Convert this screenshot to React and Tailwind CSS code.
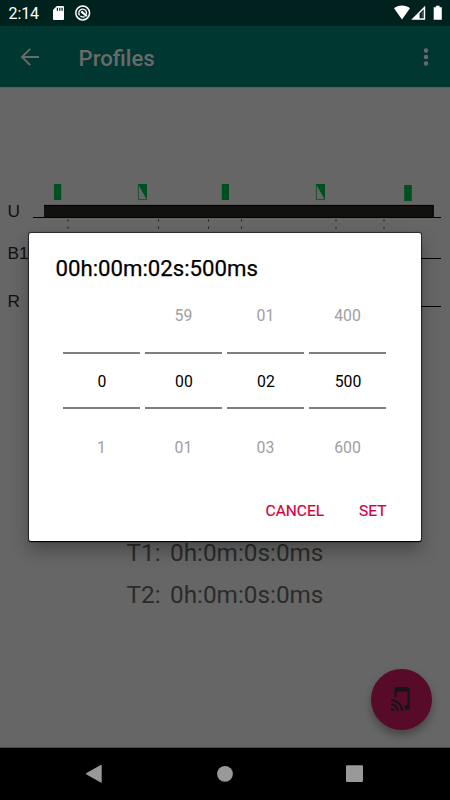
import { useState } from "react";

const columns = [
  { name: "hours", prev: "", value: "0", next: "1" },
  { name: "minutes", prev: "59", value: "00", next: "01" },
  { name: "seconds", prev: "01", value: "02", next: "03" },
  { name: "millis", prev: "400", value: "500", next: "600" },
];

function StatusBar() {
  return (
    <div className="flex h-[26px] items-center bg-[#00221e] pl-[8.5px] text-white">
      <span className="w-[31px] text-base leading-[26px] tracking-[-0.1px] pt-[2px]">2:14</span>
      <svg className="ml-[13.5px]" width="11" height="26" viewBox="0 0 11 26" fill="#fff">
        <path d="M3.8 6H10a1 1 0 0 1 1 1v12a1 1 0 0 1-1 1H1a1 1 0 0 1-1-1V10z" />
        <path d="M3.8 7.8h1.2v3H3.8zM6.2 7.8h1.2v3H6.2zM8.5 7.8h1.2v3H8.5z" fill="#00221e" />
      </svg>
      <svg className="ml-[11px]" width="16" height="26" viewBox="0 0 16 26" fill="none" stroke="#fff">
        <circle cx="7.7" cy="13" r="6.9" strokeWidth="1.5" />
        <path d="M4.6 15.4A3.9 3.9 0 1 1 11.4 14.2M5.4 16.1A3.9 3.9 0 0 0 9.6 16.6" strokeWidth="1.3" />
        <path d="M6.2 11.4l5.6 4.8" strokeWidth="2.2" />
      </svg>
      <svg className="ml-auto mr-[7px]" width="50" height="26" viewBox="0 0 50 26" fill="#fff">
        <path d="M1 8.3C5.4 4.6 12.6 4.6 17 8.3L9 19.4z" />
        <path d="M18.2 19.8L32.2 5.8V19.8z" />
        <path d="M26.6 13.4L30.7 9.3V18.3H26.6z" fill="#00221e" />
        <path d="M28.7 11.8h1v5.8h-1z" fill="#536b68" />
        <path d="M40.7 7.2h2.2V5.8h3.7v1.4h2.2v12.6h-8.1z" />
      </svg>
    </div>
  );
}

function AppBar() {
  return (
    <div className="flex h-[61px] items-center bg-[#003731] px-5 text-[#6a6a6a]">
      <svg width="20" height="20" viewBox="0 0 20 20" fill="none" stroke="currentColor" strokeWidth="1.9">
        <path d="M19 10H2.2M10.2 1.8L2 10l8.2 8.2" />
      </svg>
      <h1 className="ml-[38.5px] pt-[2px] text-[22.2px] leading-8 font-medium">Profiles</h1>
      <svg className="ml-auto" width="8" height="20" viewBox="0 0 8 20" fill="currentColor">
        <circle cx="4" cy="3.5" r="2.2" />
        <circle cx="4" cy="10" r="2.2" />
        <circle cx="4" cy="16.5" r="2.2" />
      </svg>
    </div>
  );
}

function TimingDiagram() {
  return (
    <svg className="block" width="450" height="150" viewBox="0 170 450 150">
      <g fill="#004f20">
        <path d="M54 184h7.2v16H54zM221.8 184h7.2v16h-7.2zM404.2 185h7.6v16h-7.6z" />
        <path d="M138 184h9v16zM316 184h9v16z" />
      </g>
      <path
        d="M138.4 184V199.6H147M316.4 184V199.6H325"
        stroke="#004f20"
        strokeWidth="0.8"
        fill="none"
      />
      <rect x="44" y="205" width="389.5" height="12.5" fill="#11120f" />
      <path d="M44 205.4h389.2V217.5" stroke="#000" strokeWidth="1" fill="none" />
      <path d="M33 217.5H441M33 258.5H441M33 306.5H441" stroke="#000" />
      {[68, 158.5, 208.5, 241.5, 336, 384].map((x) => (
        <path key={x} d={`M${x} 219.5v2M${x} 226.7v2`} stroke="#1b1b1b" />
      ))}
      <g fill="#111" fontSize="17.3" fontFamily="'Liberation Sans', Arial, sans-serif">
        <text x="7.6" y="217">U</text>
        <text x="7.6" y="259">B1</text>
        <text x="7.6" y="307">R</text>
      </g>
    </svg>
  );
}

function TimeDialog({ onClose }) {
  return (
    <div className="absolute top-[233px] left-[29px] flex h-[308px] w-[392px] flex-col rounded-[2px] bg-white shadow-[0_1px_1px_#000,0_0_1px_1px_rgba(0,0,0,0.6),0_9px_18px_rgba(0,0,0,0.3)]">
      <h2 className="mt-[19px] ml-[26.5px] text-[22.2px] leading-8 font-normal text-black [-webkit-text-stroke:0.25px_#000]">
        00h:00m:02s:500ms
      </h2>
      <div className="mt-[-1px] ml-[34px] flex gap-[5px]">
        {columns.map((col) => (
          <div key={col.name} className="flex w-[77px] flex-col text-center text-[15.8px] text-[#a0a0a0]">
            <div className="flex h-[69px] items-start justify-center pt-[21px] leading-6">{col.prev}</div>
            <div className="flex h-[57px] items-start justify-center border-y-2 border-[#7f7f7f] pt-[16px] pl-[1px] leading-6 text-black">
              {col.value}
            </div>
            <div className="flex h-[60px] items-start justify-center pt-[27px] leading-6">{col.next}</div>
          </div>
        ))}
      </div>
      <div className="mt-[29.5px] mr-[34.5px] flex justify-end gap-[35px] text-[15.5px] leading-6 font-normal text-[#d2003f] [-webkit-text-stroke:0.2px_#d2003f]">
        <button onClick={onClose}>CANCEL</button>
        <button onClick={onClose}>SET</button>
      </div>
    </div>
  );
}

function NavBar() {
  return (
    <div className="flex h-[52px] items-center bg-black px-[85px]">
      <svg width="280" height="52" viewBox="85 748 280 52" fill="#999">
        <path d="M86.5 773.1L100.7 765q1-.5 1 .6V782q0 1.1-1 .6L86.5 774.4q-1-.6 0-1.3z" />
        <circle cx="225" cy="773.8" r="7.9" />
        <rect x="346" y="765.2" width="17" height="16.8" rx="1" />
      </svg>
    </div>
  );
}

export default function App() {
  const [open, setOpen] = useState(true);

  return (
    <div className="relative flex h-[800px] w-[450px] flex-col overflow-hidden bg-[#666666] font-['Roboto',sans-serif]">
      <StatusBar />
      <AppBar />
      <div className="flex flex-1 flex-col border-y border-t-[#5b5b5b] border-b-[#484848] pt-[82px]">
        <TimingDiagram />
        <div className="mt-[212px] ml-[126.5px] text-[24.3px] leading-[41.5px] text-[#2b2b2b]">
          <p className="flex gap-[9.5px]">
            <span>T1:</span>
            <span>0h:0m:0s:0ms</span>
          </p>
          <p className="flex gap-[9.5px]">
            <span>T2:</span>
            <span>0h:0m:0s:0ms</span>
          </p>
        </div>
        <button
          className="mt-auto mr-[18px] mb-[17.5px] flex size-[61px] items-center justify-center self-end rounded-full bg-[#580a29] shadow-[0_5px_9px_rgba(0,0,0,0.32)]"
          onClick={() => setOpen(true)}
          aria-label="Read tag"
        >
          <svg width="26" height="26" viewBox="0 0 24 24" fill="#17131a">
            <path d="M2 16v2c2.76 0 5 2.24 5 5h2c0-3.87-3.13-7-7-7zm0 4v3h3c0-1.66-1.34-3-3-3zm0-8v2c4.97 0 9 4.03 9 9h2c0-6.08-4.92-11-11-11zM17 1.01L7 1c-1.1 0-2 .9-2 2v7.37c.69.16 1.36.37 2 .64V5h10v13h-3.03c.52 1.25.84 2.59.95 4H17c1.1 0 2-.9 2-2V3c0-1.1-.9-1.99-2-1.99z" />
          </svg>
        </button>
      </div>
      <NavBar />
      {open && <TimeDialog onClose={() => setOpen(false)} />}
    </div>
  );
}
